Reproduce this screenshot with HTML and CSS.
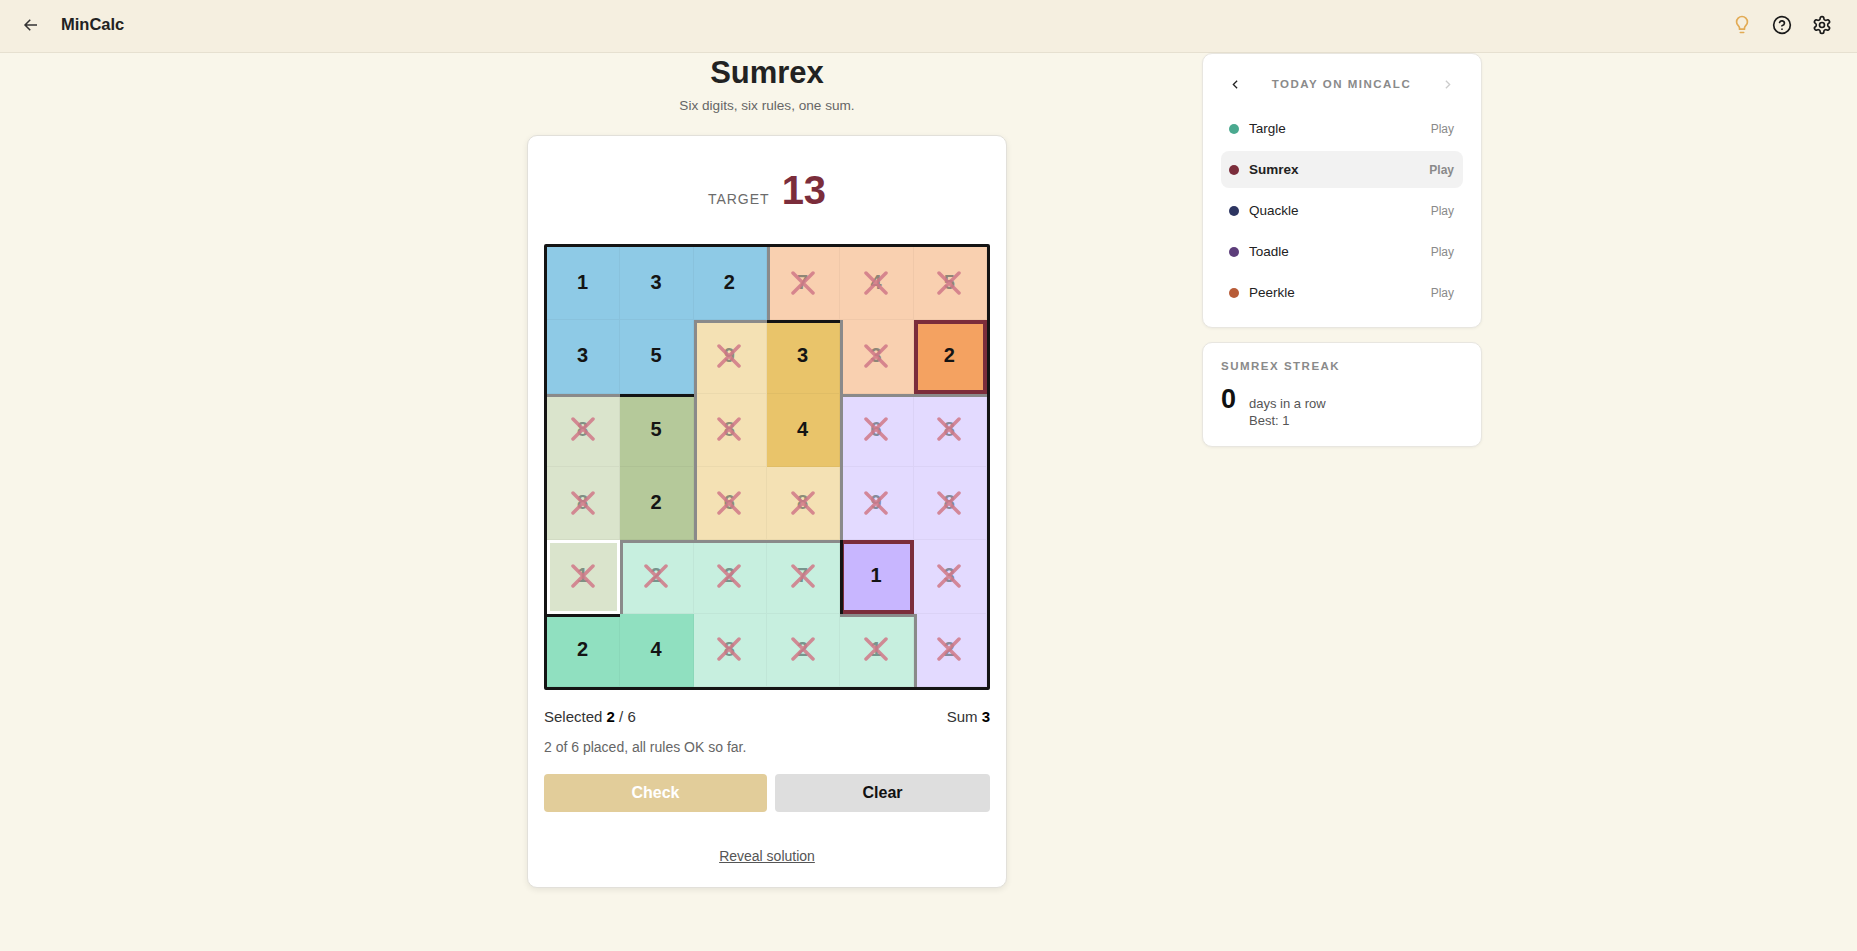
FILE: index.html
```html
<!DOCTYPE html>
<html lang="en">

<head>
  <meta charset="UTF-8" />
  <title>Sumrex - MinCalc</title>
  <link rel="stylesheet" href="styles.css">
</head>

<body>
  <header class="topbar">
    <div class="topbar-left">
      <svg class="back-icon" viewBox="0 0 24 24"><path d="M20 12H4M11 5l-7 7 7 7" /></svg>
      <span class="brand">MinCalc</span>
    </div>
    <div class="topbar-right">
      <svg class="top-icon bulb" viewBox="0 0 24 24"><path d="M15 15.5c.2-1.2.8-2.1 1.7-3 1.1-1.1 1.8-2.6 1.8-4.2A6.5 6.5 0 0 0 5.5 8.300c0 1.600.7 3.100 1.800 4.200.9.900 1.500 1.800 1.700 3v1.500h6z" /><path d="M10 21h4" /></svg>
      <svg class="top-icon" viewBox="0 0 24 24"><circle cx="12" cy="12" r="10" /><path d="M9.09 9a3 3 0 0 1 5.83 1c0 2-3 3-3 3" /><path d="M12 17h.01" /></svg>
      <svg class="top-icon" viewBox="0 0 24 24"><path d="M12.22 2h-.44a2 2 0 0 0-2 2v.18a2 2 0 0 1-1 1.73l-.43.25a2 2 0 0 1-2 0l-.15-.08a2 2 0 0 0-2.73.73l-.22.38a2 2 0 0 0 .73 2.73l.15.1a2 2 0 0 1 1 1.72v.51a2 2 0 0 1-1 1.74l-.15.09a2 2 0 0 0-.73 2.73l.22.38a2 2 0 0 0 2.73.73l.15-.08a2 2 0 0 1 2 0l.43.25a2 2 0 0 1 1 1.73V20a2 2 0 0 0 2 2h.44a2 2 0 0 0 2-2v-.18a2 2 0 0 1 1-1.73l.43-.25a2 2 0 0 1 2 0l.15.08a2 2 0 0 0 2.73-.73l.22-.39a2 2 0 0 0-.73-2.73l-.15-.08a2 2 0 0 1-1-1.74v-.5a2 2 0 0 1 1-1.74l.15-.09a2 2 0 0 0 .73-2.73l-.22-.38a2 2 0 0 0-2.73-.73l-.15.08a2 2 0 0 1-2 0l-.43-.25a2 2 0 0 1-1-1.73V4a2 2 0 0 0-2-2z" /><circle cx="12" cy="12" r="3" /></svg>
    </div>
  </header>

  <div class="layout">
    <main class="game">
      <h1>Sumrex</h1>
      <p class="tagline">Six digits, six rules, one sum.</p>

      <section class="card">
        <div class="target"><span class="target-label">TARGET</span><span class="target-value">13</span></div>

        <div class="grid" id="grid"></div>

        <div class="stats">
          <span>Selected <b>2</b> / 6</span>
          <span>Sum <b>3</b></span>
        </div>
        <p class="status">2 of 6 placed, all rules OK so far.</p>

        <div class="actions">
          <button class="btn btn-check">Check</button>
          <button class="btn btn-clear">Clear</button>
        </div>

        <a class="reveal" href="#">Reveal solution</a>
      </section>
    </main>

    <aside class="sidebar">
      <section class="panel today">
        <div class="today-head">
          <svg class="chev" viewBox="0 0 24 24"><path d="M15 5l-7 7 7 7" /></svg>
          <span class="panel-title">TODAY ON MINCALC</span>
          <svg class="chev chev-off" viewBox="0 0 24 24"><path d="M9 5l7 7-7 7" /></svg>
        </div>
        <ul class="game-list">
          <li class="game-row"><i class="dot dot-targle"></i><span class="game-name">Targle</span><span class="play">Play</span></li>
          <li class="game-row active"><i class="dot dot-sumrex"></i><span class="game-name">Sumrex</span><span class="play">Play</span></li>
          <li class="game-row"><i class="dot dot-quackle"></i><span class="game-name">Quackle</span><span class="play">Play</span></li>
          <li class="game-row"><i class="dot dot-toadle"></i><span class="game-name">Toadle</span><span class="play">Play</span></li>
          <li class="game-row"><i class="dot dot-peerkle"></i><span class="game-name">Peerkle</span><span class="play">Play</span></li>
        </ul>
      </section>

      <section class="panel streak">
        <span class="panel-title">SUMREX STREAK</span>
        <div class="streak-body">
          <span class="streak-num">0</span>
          <span class="streak-text">days in a row<br>Best: 1</span>
        </div>
      </section>
    </aside>
  </div>

  <script src="grid.js"></script>
</body>

</html>
```

FILE: grid.js
```js
// value, region, then flags: s selected, x crossed, plus edge classes
const cells = [
  ["1 blue s", "3 blue s", "2 blue s", "7 peach x gl", "4 peach x", "5 peach x"],
  ["3 blue s", "5 blue s", "9 yellow x gl gt", "3 yellow s kt", "3 peach x gl", "2 peach s cur"],
  ["8 sage x gt", "5 sage s kt", "8 yellow x gl", "4 yellow s", "6 lilac x gl gt", "8 lilac x gt"],
  ["8 sage x", "2 sage s", "6 yellow x gl", "8 yellow x", "9 lilac x gl", "8 lilac x"],
  ["1 sage x hole", "2 mint x gl gt", "2 mint x gt", "7 mint x gt", "1 lilac s cur kl", "3 lilac x"],
  ["2 mint s kt", "4 mint s", "8 mint x", "2 mint x", "1 mint x gt", "2 lilac x gl"],
];

const grid = document.getElementById("grid");

cells.flat().forEach((spec) => {
  const [value, region, ...flags] = spec.split(" ");
  const cell = document.createElement("div");
  cell.classList.add("cell", region, ...flags);

  const digit = document.createElement("span");
  digit.classList.add("digit");
  digit.textContent = value;
  cell.appendChild(digit);

  if (flags.includes("x")) {
    cell.insertAdjacentHTML("beforeend", '<svg class="cross" viewBox="0 0 24 24"><path d="M2 2l20 20M22 2L2 22" /></svg>');
  }
  grid.appendChild(cell);
});
```

FILE: styles.css
```css
* {
  margin: 0;
  padding: 0;
  box-sizing: border-box;
  font-family: "Liberation Sans", Arial, sans-serif;
}

body {
  background-color: #f9f6ea;
  color: #222;
  min-height: 100vh;
  overflow: hidden;
}

/* Top bar */
.topbar {
  height: 53px;
  background: #f5efe0;
  border-bottom: 1px solid #e6e0d0;
  display: flex;
  justify-content: space-between;
  align-items: center;
  padding: 0 25px 3px 22px;
}

.topbar-left {
  display: flex;
  align-items: center;
  gap: 21px;
}

.back-icon {
  width: 18px;
  height: 18px;
  fill: none;
  stroke: #333;
  stroke-width: 2;
}

.brand {
  font-size: 16.500px;
  font-weight: bold;
}

.topbar-right {
  display: flex;
  align-items: center;
  gap: 20px;
}

.top-icon {
  width: 20px;
  height: 20px;
  fill: none;
  stroke: #1a1a1a;
  stroke-width: 2;
  stroke-linecap: round;
  stroke-linejoin: round;
}

.top-icon.bulb {
  stroke: #e2ab55;
}

/* Layout */
.layout {
  display: flex;
  align-items: flex-start;
  gap: 195px;
  padding-left: 527px;
}

.game {
  width: 480px;
  flex: none;
  text-align: center;
}

h1 {
  font-size: 31px;
  line-height: 37px;
  margin-top: 1px;
}

.tagline {
  font-size: 13.600px;
  line-height: 15px;
  color: #666;
  margin-top: 7px;
}

.card {
  background: #fff;
  border: 1px solid #e2e0da;
  border-radius: 10px;
  box-shadow: 0 2px 6px rgba(0, 0, 0, 0.08);
  padding: 16px;
  margin-top: 22px;
  height: 753px;
  text-align: left;
}

.target {
  display: flex;
  justify-content: center;
  align-items: baseline;
  gap: 12px;
  height: 92px;
  padding-top: 15px;
}

.target-label {
  font-size: 14px;
  letter-spacing: 1px;
  color: #6b6b6b;
}

.target-value {
  font-size: 40px;
  line-height: 46px;
  font-weight: bold;
  color: #7b2d3b;
}

/* Puzzle grid */
.grid {
  display: grid;
  grid-template-columns: repeat(6, 1fr);
  grid-template-rows: repeat(6, 1fr);
  width: 446px;
  height: 446px;
  border: 3px solid #141414;
  border-radius: 2px;
}

.cell {
  display: grid;
  place-items: center;
  padding: 0 2px 2px 0;
  box-shadow: inset 3px 0 var(--edge-left, transparent),
    inset 0 3px var(--edge-top, transparent),
    inset -1px -1px rgba(0, 0, 0, 0.035);
}

.digit,
.cross {
  grid-area: 1 / 1;
}

.digit {
  font-size: 20px;
  font-weight: bold;
  color: #141414;
}

.x .digit {
  color: rgba(50, 70, 70, 0.55);
}

.cross {
  width: 24px;
  height: 24px;
  fill: none;
  stroke: rgba(208, 120, 135, 0.85);
  stroke-width: 3.500;
  stroke-linecap: round;
}

.blue { background: #8ecae6; }
.peach { background: #f9d0b0; }
.peach.s { background: #f4a261; }
.yellow { background: #f4e1b4; }
.yellow.s { background: #e9c46a; }
.sage { background: #dae4cc; }
.sage.s { background: #b5c99a; }
.mint { background: #c7efdf; }
.mint.s { background: #90e0c0; }
.lilac { background: #e3daff; }
.lilac.s { background: #c8b6ff; }

/* Region edges */
.gl { --edge-left: #8a8a8a; }
.gt { --edge-top: #8a8a8a; }
.kt { --edge-top: #141414; }
.cur { box-shadow: inset 0 0 0 4px #7b2d3b; }
.cur.kl { box-shadow: inset 3px 0 #141414, inset 0 0 0 4px #7b2d3b; }
.hole { box-shadow: inset 0 0 0 3px #fff; }

/* Below the grid */
.stats {
  display: flex;
  justify-content: space-between;
  font-size: 15px;
  line-height: 17px;
  margin-top: 18px;
  color: #333;
}

.stats b {
  color: #000;
}

.status {
  font-size: 14px;
  line-height: 16px;
  color: #666;
  margin-top: 14px;
}

.actions {
  display: flex;
  gap: 8px;
  margin-top: 19px;
}

.btn {
  height: 38px;
  border: none;
  border-radius: 4px;
  font-size: 16px;
  font-weight: bold;
}

.btn-check {
  flex: 0 0 223px;
  background: #e2cd9a;
  color: #fff;
}

.btn-clear {
  flex: 1;
  background: #dedede;
  color: #111;
}

.reveal {
  display: block;
  width: fit-content;
  margin: 36px auto 0;
  font-size: 14px;
  line-height: 16px;
  color: #555;
}

/* Sidebar */
.sidebar {
  width: 280px;
  flex: none;
  display: flex;
  flex-direction: column;
  gap: 14px;
}

.panel {
  background: #fff;
  border: 1px solid #e8e6e0;
  border-radius: 10px;
  box-shadow: 0 1px 3px rgba(0, 0, 0, 0.05);
}

.panel-title {
  font-size: 11.500px;
  line-height: 13px;
  font-weight: bold;
  letter-spacing: 1.500px;
  color: #8a8a8a;
}

.today {
  height: 275px;
  padding: 23px 18px 0;
}

.today-head {
  display: flex;
  justify-content: space-between;
  align-items: center;
  padding: 0 9px 0 8px;
  height: 14px;
}

.chev {
  width: 13px;
  height: 13px;
  fill: none;
  stroke: #222;
  stroke-width: 2.400;
}

.chev-off {
  stroke: #ccc;
}

.game-list {
  list-style: none;
  margin-top: 19px;
  display: flex;
  flex-direction: column;
  gap: 4px;
}

.game-row {
  display: flex;
  align-items: center;
  height: 37px;
  padding: 0 9px 0 8px;
  border-radius: 8px;
  font-size: 13.500px;
}

.game-row.active {
  background: #f2f2f2;
  font-weight: bold;
}

.dot {
  width: 10px;
  height: 10px;
  border-radius: 50%;
  margin-right: 10px;
}

.dot-targle { background: #4aa98f; }
.dot-sumrex { background: #7b2d3b; }
.dot-quackle { background: #2d3561; }
.dot-toadle { background: #5c3d7a; }
.dot-peerkle { background: #b85c38; }

.game-name {
  flex: 1;
}

.play {
  font-size: 12px;
  color: #8a8a8a;
}

.streak {
  height: 105px;
  padding: 13px 18px 0;
}

.streak-body {
  display: flex;
  align-items: flex-start;
  gap: 13px;
  margin-top: 10px;
}

.streak-num {
  font-size: 27px;
  line-height: 31px;
  font-weight: bold;
  color: #111;
}

.streak-text {
  font-size: 13px;
  line-height: 17px;
  color: #555;
  padding-top: 11px;
}
```
